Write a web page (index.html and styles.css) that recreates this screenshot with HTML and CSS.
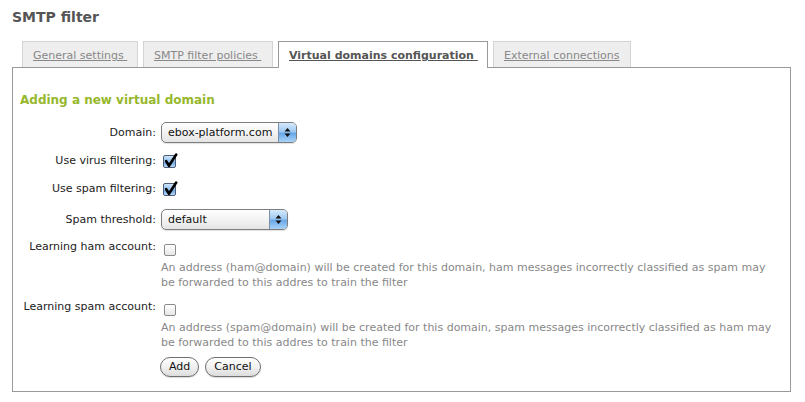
FILE: index.html
```html
<!DOCTYPE html>
<html>
<head>
<meta charset="utf-8">
<link rel="stylesheet" href="styles.css">
</head>
<body>
<h1 class="title">SMTP filter</h1>
<div class="tabs">
  <a class="tab tab-general">General settings&nbsp;</a>
  <a class="tab tab-policies">SMTP filter policies&nbsp;</a>
  <a class="tab tab-domains active">Virtual domains configuration&nbsp;</a>
  <a class="tab tab-external">External connections</a>
</div>
<div class="panel">
  <h2 class="heading">Adding a new virtual domain</h2>
  <div class="form">
    <div class="row row-select">
      <label class="lbl">Domain:</label>
      <div class="ctl">
        <span class="select select-domain">
          <span class="select-text">ebox-platform.com</span>
          <span class="select-btn"><svg width="7" height="11" viewBox="0 0 7 11"><path d="M3.5 1 L6.5 4.5 L0.5 4.5 Z M3.5 10 L6.5 6.5 L0.5 6.5 Z" fill="#111"/></svg></span>
        </span>
      </div>
    </div>
    <div class="row row-check">
      <label class="lbl">Use virus filtering:</label>
      <div class="ctl">
        <span class="cb checked"><svg class="tick" width="14" height="15" viewBox="0 0 14 15"><path d="M2.2 8.2 L5 12.8 L12.2 1.5" fill="none" stroke="#000" stroke-width="2.6" stroke-linecap="round" stroke-linejoin="round"/></svg></span>
      </div>
    </div>
    <div class="row row-check">
      <label class="lbl">Use spam filtering:</label>
      <div class="ctl">
        <span class="cb checked"><svg class="tick" width="14" height="15" viewBox="0 0 14 15"><path d="M2.2 8.2 L5 12.8 L12.2 1.5" fill="none" stroke="#000" stroke-width="2.6" stroke-linecap="round" stroke-linejoin="round"/></svg></span>
      </div>
    </div>
    <div class="row row-select row-threshold">
      <label class="lbl">Spam threshold:</label>
      <div class="ctl">
        <span class="select select-threshold">
          <span class="select-text">default</span>
          <span class="select-btn"><svg width="7" height="11" viewBox="0 0 7 11"><path d="M3.5 1 L6.5 4.5 L0.5 4.5 Z M3.5 10 L6.5 6.5 L0.5 6.5 Z" fill="#111"/></svg></span>
        </span>
      </div>
    </div>
    <div class="row row-top row-ham">
      <label class="lbl">Learning ham account:</label>
      <div class="ctl">
        <span class="cb"></span>
        <p class="desc">An address (ham@domain) will be created for this domain, ham messages incorrectly classified as spam may<br>be forwarded to this addres to train the filter</p>
      </div>
    </div>
    <div class="row row-top row-spam">
      <label class="lbl">Learning spam account:</label>
      <div class="ctl">
        <span class="cb"></span>
        <p class="desc">An address (spam@domain) will be created for this domain, spam messages incorrectly classified as ham may<br>be forwarded to this addres to train the filter</p>
      </div>
    </div>
    <div class="row row-buttons">
      <span class="lbl"></span>
      <div class="ctl buttons">
        <button class="btn">Add</button>
        <button class="btn">Cancel</button>
      </div>
    </div>
  </div>
</div>
</body>
</html>
```

FILE: styles.css
```css
html, body {
  margin: 0;
  padding: 0;
  background: #fff;
}
body {
  font-family: "DejaVu Sans", Verdana, sans-serif;
  font-size: 11px;
  color: #222;
  padding: 0 14px 0 12px;
}
.title {
  margin: 0;
  padding-top: 9px;
  font-size: 14px;
  line-height: 17px;
  font-weight: bold;
  color: #555;
}
.tabs {
  display: flex;
  align-items: flex-end;
  gap: 5px;
  padding-left: 10px;
  margin-top: 15px;
  height: 27px;
}
.tab {
  display: block;
  box-sizing: border-box;
  height: 26px;
  margin-bottom: 1px;
  padding: 0 0 0 10px;
  border: 1px solid #d4d4d4;
  border-bottom: none;
  background: #eeeeee;
  color: #888;
  text-decoration: underline;
  line-height: 28px;
  white-space: nowrap;
}
.tab-general { width: 116px; }
.tab-policies { width: 130px; }
.tab-domains { width: 210px; }
.tab-external { width: 138px; }
.tab.active {
  position: relative;
  height: 27px;
  margin-bottom: 0;
  background: #fff;
  border-color: #999;
  color: #555;
  font-weight: bold;
  padding-left: 10px;
  line-height: 28px;
}
.panel {
  border: 1px solid #999;
  margin-top: -1px;
  padding: 25px 0 14px 0;
}
.heading {
  margin: 0 0 0 7px;
  font-size: 12px;
  line-height: 15px;
  font-weight: bold;
  color: #96b82c;
}
.form {
  margin-top: 14px;
}
.row {
  display: grid;
  grid-template-columns: 143px 1fr;
  column-gap: 5px;
  align-items: center;
  margin-bottom: 8px;
}
.row-select {
  height: 21px;
}
.row-check {
  height: 20px;
}
.row-threshold {
  margin-top: 10px;
}
.row-top {
  align-items: start;
}
.row-ham {
  margin-top: 10px;
  margin-bottom: 0;
}
.row-spam {
  margin-top: 10px;
  margin-bottom: 0;
}
.row-buttons {
  margin-top: 7px;
  margin-bottom: 0;
}
.lbl {
  text-align: right;
  line-height: 14px;
  white-space: nowrap;
}
.ctl {
  display: flex;
  flex-direction: column;
  align-items: flex-start;
}
.select {
  display: flex;
  box-sizing: border-box;
  height: 21px;
  border: 1px solid #7d7d7d;
  border-radius: 5px;
  background: linear-gradient(#ffffff, #f3f3f3 50%, #e4e4e4);
  box-shadow: 0 1px 1px rgba(0,0,0,0.12);
  overflow: hidden;
}
.select-domain {
  width: 136px;
}
.select-threshold {
  width: 127px;
}
.select-text {
  flex: 1;
  padding-left: 6px;
  line-height: 20px;
  font-size: 11px;
  color: #111;
  white-space: nowrap;
  overflow: hidden;
}
.select-btn {
  width: 17px;
  flex: none;
  display: flex;
  align-items: center;
  justify-content: center;
  border-left: 1px solid #7d8fa8;
  background: linear-gradient(#d6e9fb, #9fc9f1 45%, #6aa8e8 55%, #a9d3f7);
}
.cb {
  display: block;
  position: relative;
  box-sizing: border-box;
  width: 12px;
  height: 12px;
  margin-left: 3px;
  border: 1px solid #8a8a8a;
  border-radius: 2px;
  background: linear-gradient(#ffffff, #e6e6e6);
}
.cb.checked {
  width: 13px;
  height: 13px;
  margin-left: 2px;
  border-color: #4d5d77;
  background: linear-gradient(#cfe5fb, #8fc0ef 50%, #6ea9e6 60%, #b6d9f8);
}
.tick {
  position: absolute;
  left: 0;
  top: -3px;
}
.row-ham .cb, .row-spam .cb {
  margin-top: 4px;
}
.desc {
  margin: 4px 0 0 0;
  color: #888;
  line-height: 15px;
  white-space: nowrap;
}
.buttons {
  flex-direction: row;
  gap: 6px;
  margin-left: -1px;
}
.btn {
  box-sizing: border-box;
  height: 20px;
  padding: 0 8px;
  border: 1px solid #6f6f6f;
  border-radius: 10px;
  background: linear-gradient(#ffffff, #f1f1f1 50%, #dcdcdc);
  box-shadow: 0 1px 1px rgba(0,0,0,0.15);
  font-family: "DejaVu Sans", Verdana, sans-serif;
  font-size: 11px;
  color: #111;
  line-height: 18px;
}
```
